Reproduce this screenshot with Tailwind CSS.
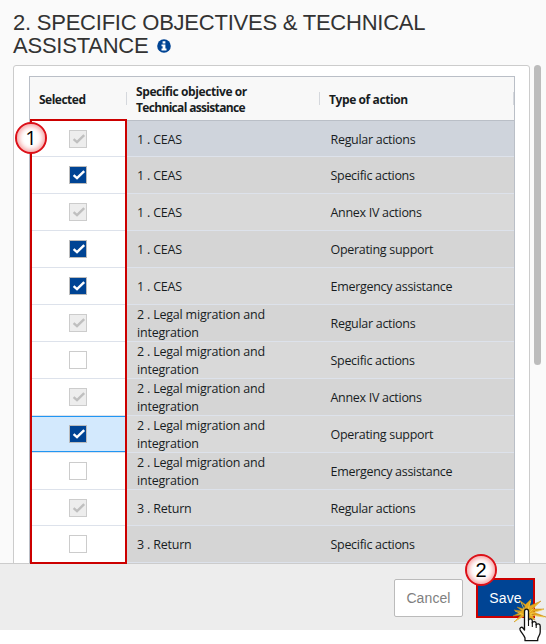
<!DOCTYPE html>
<html lang="en">
<head>
  <meta charset="UTF-8">
  <meta name="viewport" content="width=device-width, initial-scale=1.0">
  <title>Specific Objectives &amp; Technical Assistance</title>
  <script src="https://cdn.jsdelivr.net/npm/@tailwindcss/browser@4"></script>
</head>
<body class="relative w-[546px] h-[644px] overflow-hidden bg-white font-['Liberation_Sans',sans-serif]">
  <main class="h-[563px] overflow-hidden bg-[#fafafa] pl-[13px] pt-[11px]">
    <h1 class="h-[54px] text-[22px] leading-[23px] tracking-[-0.23px] text-[#333]">
      <span class="block whitespace-nowrap">2. SPECIFIC OBJECTIVES &amp; TECHNICAL</span>
      <span class="flex items-center whitespace-nowrap">ASSISTANCE
        <svg class="ml-[9px] mt-px size-[14px]" viewBox="0 0 14 14">
          <circle cx="7" cy="7" r="6.8" fill="#004494"/>
          <path d="M5.6 2.2h2.8v2.2H5.6zM4.5 5.4h3.9v4.2h1.1v2H4.5v-2h1.1V7.3H4.5z" fill="#fff"/>
        </svg>
      </span>
    </h1>

    <div class="flex">
      <!-- Panel with the grid -->
      <div class="w-[517px] h-[510px] shrink-0 rounded-t-[3px] border border-[#ccc] bg-white pl-[15px] pt-[10px]">
        <div class="w-[486px] h-[500px] border border-[#babfc7] font-['Open_Sans','Noto_Sans',sans-serif]">
          <div class="flex h-[44px] items-center border-b border-[#babfc7] bg-[#f8f8f8] text-[12px] leading-4 font-bold text-[#181d1f]">
            <div class="flex h-[13px] w-[97px] items-center border-r border-[#d5d8dd] pl-[9px] pt-[2px] tracking-[-0.5px]"><span>Selected</span></div>
            <div class="flex h-[13px] w-[193px] items-center border-r border-[#d5d8dd] pl-[9px] pt-[2px]">
              <span><span class="tracking-[-0.41px]">Specific objective or</span><br><span class="tracking-[-0.67px]">Technical assistance</span></span>
            </div>
            <div class="flex h-[13px] w-[194px] items-center border-r border-[#d5d8dd] pl-[9px] pt-[2px] tracking-[-0.4px]"><span>Type of action</span></div>
          </div>
          <div id="rows" class="text-[12.5px] leading-[18px] text-[#181d1f]"></div>
        </div>
      </div>
      <div class="ml-[4px] h-[300px] w-[7px] rounded-full bg-[#bcbcbc]"></div>
    </div>
  </main>

  <footer class="flex h-[67px] justify-end border-t border-[#ccc] bg-[#ededed] pr-[11px] pt-[14px] text-[14px]">
    <button class="mt-px mr-[13px] h-[38px] w-[69px] rounded-[2px] border border-[#bbb] bg-white text-[#808080] tracking-[0.1px]">Cancel</button>
    <button class="h-[40px] w-[59px] border-2 border-[#cc0000] bg-[#004494] text-white tracking-[0.2px]">Save</button>
  </footer>

  <!-- Callouts -->
  <div class="absolute left-[30px] top-[119px] h-[445px] w-[97px] border-2 border-[#cc0000]"></div>
  <div class="absolute left-[15px] top-[122px] flex size-[32px] items-center justify-center rounded-full border-2 border-[#dc1018] bg-white font-['Open_Sans',sans-serif] text-[20px] leading-none text-black shadow-[inset_0_0_5px_2px_#f5a3a3]">1</div>
  <div class="absolute left-[465px] top-[554px] flex size-[32px] items-center justify-center rounded-full border-2 border-[#dc1018] bg-white text-[20px] leading-none text-black shadow-[inset_0_0_5px_2px_#f5a3a3]">2</div>

  <!-- Click cursor -->
  <svg class="absolute left-[512px] top-[598px] h-[46px] w-[34px]" viewBox="0 0 34 46">
    <path d="M13 8 L7 2 L13.5 6.5 L19 1 L17.5 8 L29 3 L20 11 L32 11 L21 14 L34 19 L20 16.5 L23 22 L11 18 L2 24 L9 17 L1 18 L8 14.5 L2 12 L10 13 L5 9 L12 11Z" fill="#e5a91e" stroke="#c78a12" stroke-width=".5"/>
    <path d="M14 16 L9 4 M15 15 L18.6 3 M17 15 L27 4.5 M18 16 L31 11.5 M18 17 L32 19 M12 17 L3 13 M12 18 L3 23" stroke="#f7cf4a" stroke-width=".8" fill="none"/>
    <path d="M12.5 32V13.5c0-3.2 4-3.2 4 0v9c0-2.2 3.8-2.2 3.8.4V25c.5-2 3.9-1.8 3.9.6V27c.7-1.7 4-1.5 4 1v6c0 3-2 4-2.5 7v1.7H13V40c-1-3-3.5-5-4.9-8-.8-2.2 1.5-3.7 2.9-2z" fill="#fff" stroke="#111" stroke-width="1.3" stroke-linejoin="round"/>
    <path d="M16.5 22v6M20.3 24v5M24.2 26v4" stroke="#111" stroke-width="1.1"/>
  </svg>

  <script>
    const legal = '2 . Legal migration and<br>integration';
    // objective, action, state, height
    const rows = [
      ['1 . CEAS', 'Regular actions', 'locked', 'h-[36px]'],
      ['1 . CEAS', 'Specific actions', 'on', 'h-[37px]'],
      ['1 . CEAS', 'Annex IV actions', 'locked', 'h-[37px]'],
      ['1 . CEAS', 'Operating support', 'on', 'h-[37px]'],
      ['1 . CEAS', 'Emergency assistance', 'on', 'h-[37px]'],
      [legal, 'Regular actions', 'locked', 'h-[37px]'],
      [legal, 'Specific actions', 'off', 'h-[37px]'],
      [legal, 'Annex IV actions', 'locked', 'h-[37px]'],
      [legal, 'Operating support', 'on', 'h-[37px]'],
      [legal, 'Emergency assistance', 'off', 'h-[37px]'],
      ['3 . Return', 'Regular actions', 'locked', 'h-[36px]'],
      ['3 . Return', 'Specific actions', 'off', 'h-[37px]'],
    ];
    const boxes = {
      on: 'border-[#bbb] bg-[#004494] text-white',
      locked: 'border-[#ccc] bg-[#ededed] text-[#bfbfbf]',
      off: 'border-[#ccc] bg-white text-transparent',
    };
    document.getElementById('rows').innerHTML = rows.map(([objective, action, state, height], i) => {
      const bg = i === 0 ? 'bg-[#cfd4dc]' : i % 2 ? 'bg-[#d5d5d5]' : 'bg-[#d9d9d9]';
      const cell = i === 8 ? 'border-y border-[#2196f3] bg-[#d3e9fd]' : 'bg-white';
      return `
        <div class="flex ${height} border-b border-[#dde2eb] ${bg}">
          <div class="flex w-[97px] items-center justify-center pr-[2px] ${cell}">
            <span class="flex size-[18px] items-center justify-center border ${boxes[state]}">
              <svg class="size-[14px] shrink-0 translate-x-px" viewBox="0 0 14 14" fill="none" stroke="currentColor" stroke-width="2.4"><path d="M1.6 7.2L5 10.2L12.2 3.2"/></svg>
            </span>
          </div>
          <div class="flex w-[193px] items-center pl-[10px] tracking-[-0.2px]"><span class="-mb-[2px]">${objective}</span></div>
          <div class="flex items-center pl-[10.5px] tracking-[-0.3px]"><span class="-mb-[2px]">${action}</span></div>
        </div>`;
    }).join('');
  </script>
</body>
</html>
